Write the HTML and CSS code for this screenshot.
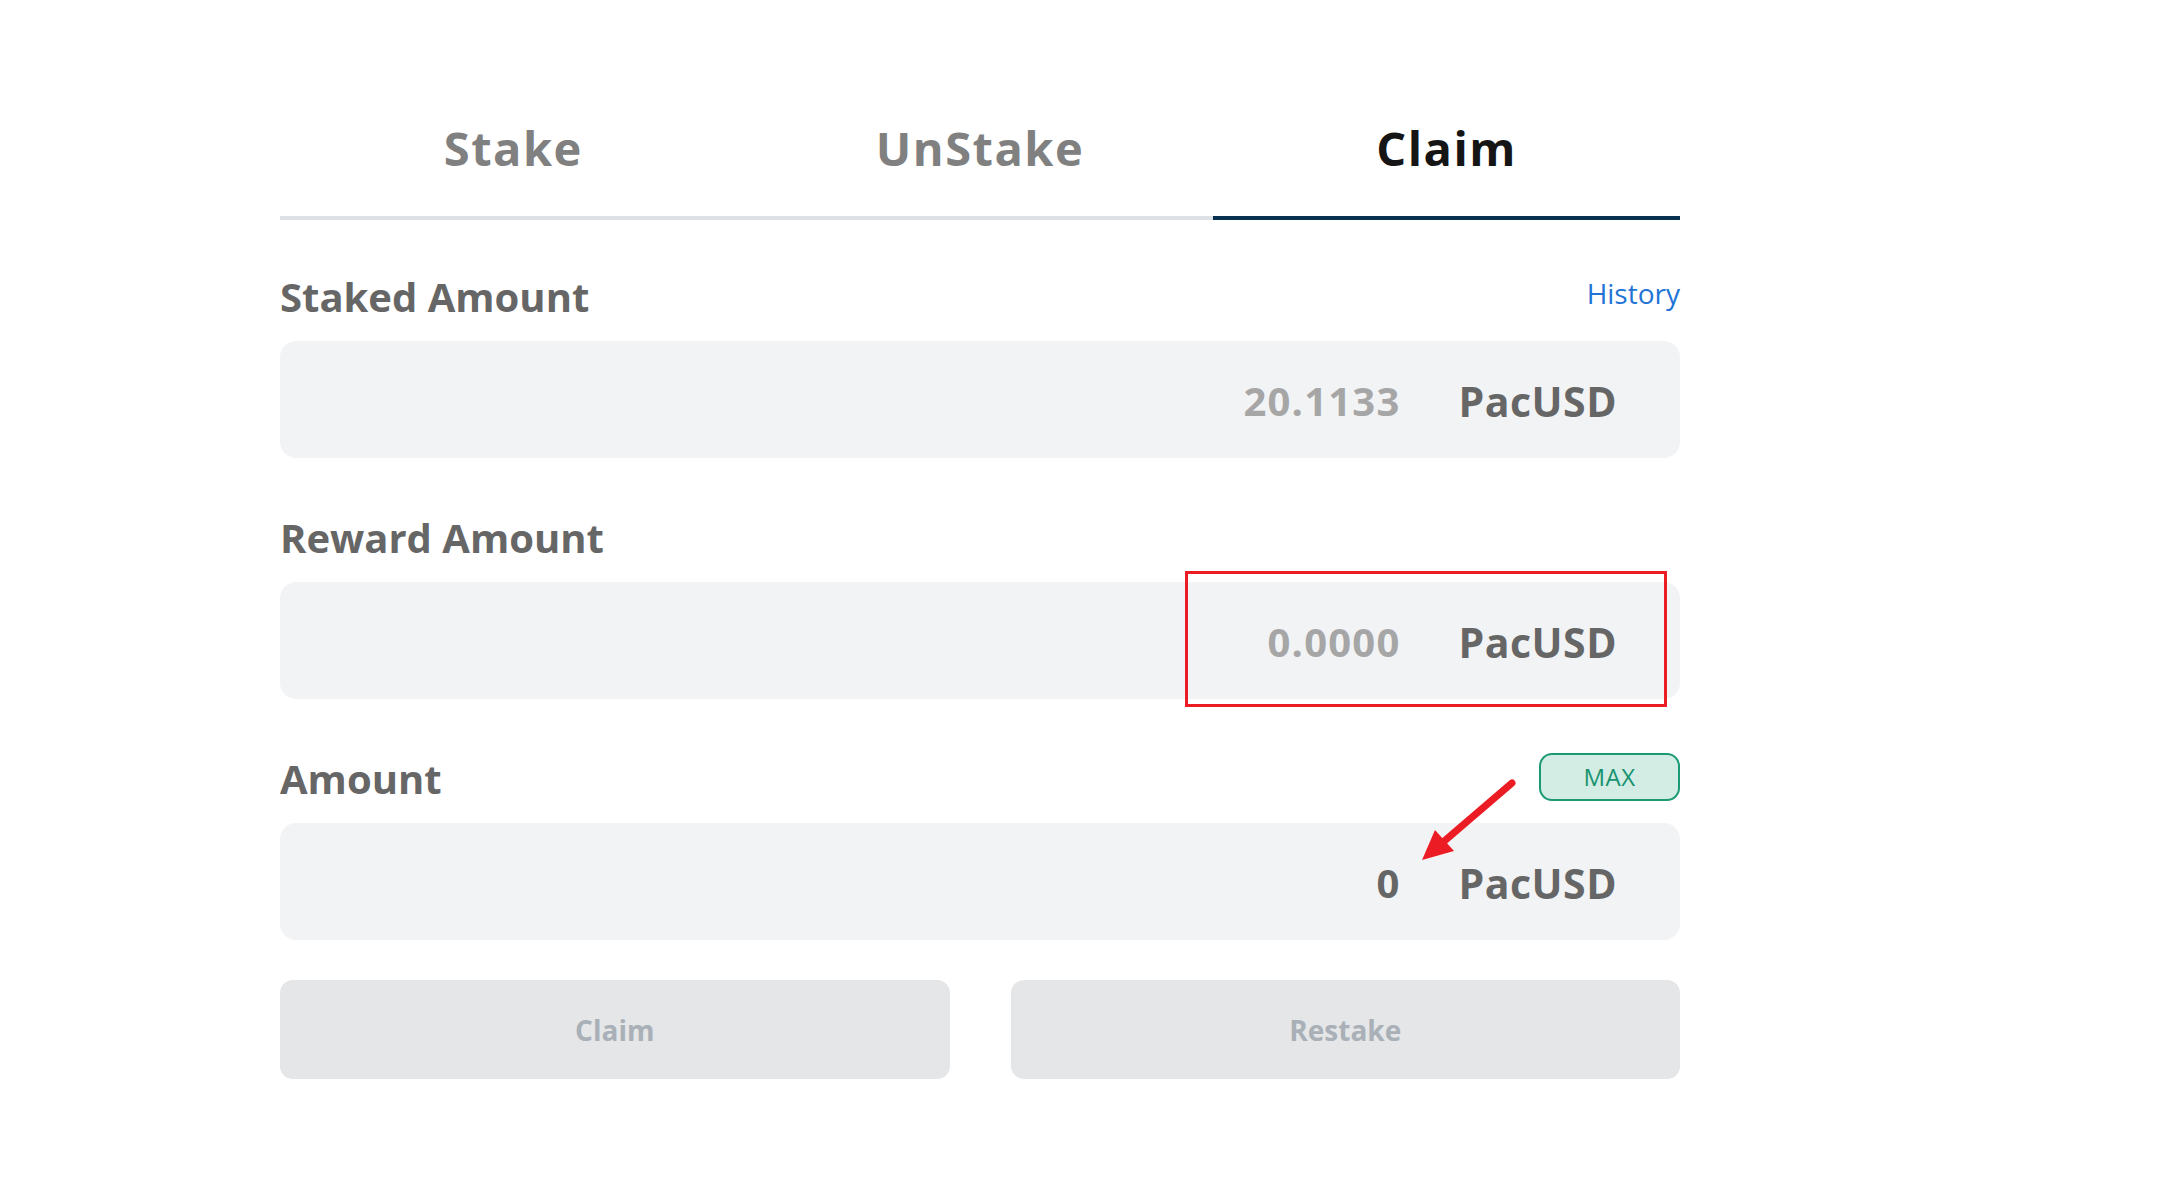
FILE: index.html
```html
<!DOCTYPE html>
<html lang="en">
<head>
<meta charset="utf-8">
<title>Claim</title>
<link rel="stylesheet" href="styles.css">
</head>
<body>
<div class="page">
  <div class="card">
    <div class="tabs">
      <div class="tab">Stake</div>
      <div class="tab">UnStake</div>
      <div class="tab active">Claim</div>
    </div>

    <div class="field first">
      <div class="field-head">
        <span class="label">Staked Amount</span>
        <a class="link" href="#">History</a>
      </div>
      <div class="box">
        <span class="value">20.1133</span>
        <span class="unit">PacUSD</span>
      </div>
    </div>

    <div class="field">
      <div class="field-head">
        <span class="label">Reward Amount</span>
      </div>
      <div class="box">
        <span class="value">0.0000</span>
        <span class="unit">PacUSD</span>
      </div>
    </div>

    <div class="field">
      <div class="field-head">
        <span class="label">Amount</span>
        <button class="max">MAX</button>
      </div>
      <div class="box">
        <span class="value filled">0</span>
        <span class="unit">PacUSD</span>
      </div>
    </div>

    <div class="actions">
      <button class="btn">Claim</button>
      <button class="btn">Restake</button>
    </div>

    <div class="annot-box"></div>
    <svg class="annot-arrow" width="130" height="100" viewBox="0 0 130 100">
      <line x1="112" y1="13" x2="42" y2="73" stroke="#ec1c24" stroke-width="7" stroke-linecap="round"/>
      <polygon points="22,90 35,60 54,81" fill="#ec1c24"/>
    </svg>
  </div>
</div>
</body>
</html>
```

FILE: styles.css
```css
html, body {
  margin: 0;
  padding: 0;
  background: #ffffff;
}

body {
  font-family: "Open Sans", "Liberation Sans", sans-serif;
  color: #666666;
}

.page {
  padding-top: 80px;
}

.card {
  position: relative;
  width: 1400px;
  margin-left: 280px;
}

.tabs {
  display: grid;
  grid-template-columns: 1fr 1fr 1fr;
}

.tab {
  height: 136px;
  display: flex;
  align-items: center;
  justify-content: center;
  border-bottom: 4px solid #dde1e6;
  font-size: 47px;
  font-weight: 700;
  letter-spacing: 1.5px;
  color: #808080;
}

.tab.active {
  color: #151515;
  border-bottom-color: #08304f;
}

.field {
  margin-top: 54px;
}

.field.first {
  margin-top: 51px;
}

.field-head {
  height: 50px;
  display: flex;
  align-items: center;
  justify-content: space-between;
}

.label {
  font-size: 40px;
  font-weight: 700;
  color: #666666;
}

.link {
  font-size: 28px;
  font-weight: 500;
  color: #1f74d6;
  text-decoration: none;
  margin-top: -6px;
}

.max {
  width: 141px;
  height: 48px;
  margin-top: -3px;
  border: 2px solid #1c9a74;
  border-radius: 13px;
  background: #d3ece4;
  color: #17936e;
  font-family: "Open Sans", "Liberation Sans", sans-serif;
  font-size: 24px;
  font-weight: 500;
  letter-spacing: 0.5px;
  padding: 0;
}

.box {
  margin-top: 20px;
  height: 117px;
  background: #f2f3f5;
  border-radius: 16px;
  display: flex;
  align-items: center;
  justify-content: flex-end;
  gap: 58px;
  padding-right: 63px;
}

.value {
  font-size: 40px;
  font-weight: 700;
  letter-spacing: 1.2px;
  color: #a6a6a6;
  margin-top: 2px;
}

.value.filled {
  color: #666666;
}

.unit {
  font-size: 41px;
  font-weight: 700;
  letter-spacing: 0.5px;
  color: #666666;
  margin-top: 2px;
}

.actions {
  margin-top: 40px;
  display: grid;
  grid-template-columns: 1fr 1fr;
  gap: 61px;
}

.btn {
  height: 99px;
  border: none;
  border-radius: 13px;
  background: #e5e6e8;
  color: #a9b0b7;
  font-family: "Open Sans", "Liberation Sans", sans-serif;
  font-size: 28px;
  font-weight: 700;
}

.annot-box {
  position: absolute;
  left: 905px;
  top: 491px;
  width: 476px;
  height: 130px;
  border: 3px solid #ec1c24;
}

.annot-arrow {
  position: absolute;
  left: 1120px;
  top: 690px;
}
```
